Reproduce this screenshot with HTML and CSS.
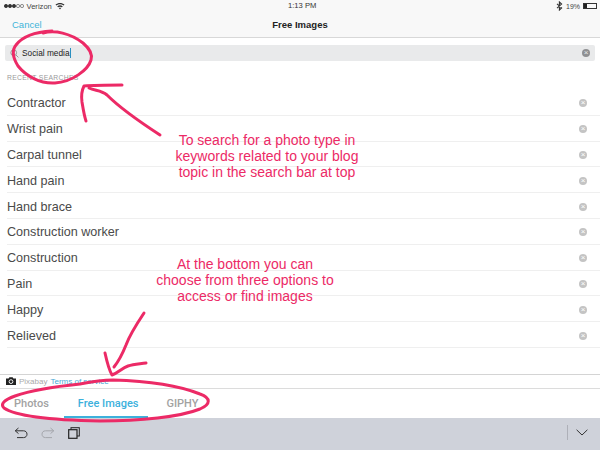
FILE: index.html
```html
<!DOCTYPE html>
<html lang="en">
<head>
  <meta charset="UTF-8" />
  <title>Free Images</title>
  <link rel="stylesheet" href="styles.css">
</head>
<body>
  <div class="page">
    <!-- Top bars -->
    <div class="status-bar">
      <div class="status-left">
        <span class="signal"><i></i><i></i><i></i><i class="off"></i><i class="off"></i></span>
        <span>Verizon</span>
        <svg class="wifi" width="10" height="8" viewBox="0 0 10 8"><path d="M0.5 2.6C3 0.3 7 0.3 9.5 2.6L8.6 3.6C6.5 1.8 3.5 1.8 1.4 3.6Z M2.2 4.4C3.8 3 6.2 3 7.8 4.4L6.9 5.3C5.8 4.4 4.2 4.4 3.1 5.3Z M3.9 6.1C4.5 5.6 5.5 5.6 6.1 6.1L5 7.4Z" fill="#333"/></svg>
      </div>
      <div class="status-time">1:13 PM</div>
      <div class="status-right">
        <svg width="7" height="10" viewBox="0 0 7 10"><path d="M1 2.8L5.6 6.9L3.4 9V1L5.6 3.1L1 7.2" fill="none" stroke="#333" stroke-width="1.1"/></svg>
        <span>19%</span>
        <span class="battery"><span class="battery-fill"></span></span>
      </div>
    </div>
    <div class="nav-bar">
      <a class="cancel">Cancel</a>
      <div class="nav-title">Free Images</div>
    </div>

    <!-- Search -->
    <div class="search-wrap">
      <div class="search-bar">
        <svg class="search-icon" width="9" height="9" viewBox="0 0 9 9"><circle cx="3.7" cy="3.7" r="2.9" fill="none" stroke="#999" stroke-width="1"/><path d="M5.9 5.9L8.4 8.4" stroke="#999" stroke-width="1"/></svg>
        <span class="search-text">Social media</span><span class="caret"></span>
        <span class="clear clear-dark">&times;</span>
      </div>
    </div>
    <div class="recent-label">RECENT SEARCHES</div>

    <ul class="recent-list">
      <li>Contractor<span class="clear">&times;</span></li>
      <li>Wrist pain<span class="clear">&times;</span></li>
      <li>Carpal tunnel<span class="clear">&times;</span></li>
      <li>Hand pain<span class="clear">&times;</span></li>
      <li>Hand brace<span class="clear">&times;</span></li>
      <li>Construction worker<span class="clear">&times;</span></li>
      <li>Construction<span class="clear">&times;</span></li>
      <li>Pain<span class="clear">&times;</span></li>
      <li>Happy<span class="clear">&times;</span></li>
      <li>Relieved<span class="clear">&times;</span></li>
    </ul>

    <!-- Bottom -->
    <div class="attribution">
      <svg width="10" height="8" viewBox="0 0 10 8"><path d="M0 1.6H2.6L3.4 0.2H6.6L7.4 1.6H10V8H0Z" fill="#222"/><circle cx="5" cy="4.6" r="1.9" fill="none" stroke="#fff" stroke-width="0.9"/></svg>
      <span class="pixabay">Pixabay</span>
      <a class="terms">Terms of service</a>
    </div>
    <div class="tabs">
      <span class="tab">Photos</span>
      <span class="tab active">Free Images</span>
      <span class="tab">GIPHY</span>
    </div>
    <div class="toolbar">
      <svg width="14" height="12" viewBox="0 0 14 12"><path d="M4.5 1L1.2 3.8L4.5 6.6M1.5 3.8H9.5C11.6 3.8 13 5.2 13 7.2C13 9.2 11.6 10.6 9.5 10.6H3" fill="none" stroke="#333" stroke-width="1"/></svg>
      <svg class="redo" width="14" height="12" viewBox="0 0 14 12"><path d="M9.5 1L12.8 3.8L9.5 6.6M12.5 3.8H4.5C2.4 3.8 1 5.2 1 7.2C1 9.2 2.4 10.6 4.5 10.6H11" fill="none" stroke="#a4a6ac" stroke-width="1"/></svg>
      <svg class="copy" width="12" height="12" viewBox="0 0 12 12"><rect x="3" y="0.7" width="8.3" height="8.3" fill="none" stroke="#222" stroke-width="1"/><rect x="0.7" y="2.7" width="8.3" height="8.6" fill="#cfd2da" stroke="#222" stroke-width="1.2"/></svg>
      <span class="toolbar-divider"></span>
      <svg width="12" height="7" viewBox="0 0 12 7"><path d="M0.6 0.8L6 6L11.4 0.8" fill="none" stroke="#333" stroke-width="1"/></svg>
    </div>

    <!-- Annotations drawn over the screenshot -->
    <svg class="marks" width="600" height="450" viewBox="0 0 600 450">
      <g fill="none" stroke="#ec2a66" stroke-width="3" stroke-linecap="round" stroke-linejoin="round">
        <path d="M43 33C55 30 70 33 83 43C90 49 93 54 91 60C88 70 72 82 55 83C40 84 26 76 18 66C13 58 12 50 16 45C22 37 35 32 52 31"/>
        <path d="M122 85C108 85 95 85 84 86C82 90 81 95 82 102C83 108 84 115 86 121"/>
        <path d="M89 88C95 91 101 90 107 95C118 106 140 122 160 135"/>
        <path d="M144 313C136 325 130 334 126 345C122 355 118 362 114 367"/>
        <path d="M105 353C107 362 109 370 112 375C118 373 122 368 128 366C134 364 140 364 146 363"/>
        <path d="M80 384C60 386 32 390 15 396C4 400 0 404 4 408C14 415 45 420 100 421C140 421 180 417 200 409C211 404 211 398 200 394C180 386 150 381 113 380C100 380 90 382 80 384"/>
      </g>
    </svg>
    <div class="note note-top">To search for a photo type in<br>keywords related to your blog<br>topic in the search bar at top</div>
    <div class="note note-bottom">At the bottom you can<br>choose from three options to<br>access or find images</div>
  </div>
</body>
</html>
```

FILE: styles.css
```css
* {
  box-sizing: border-box;
}

body {
  margin: 0;
  font-family: "Liberation Sans", Arial, sans-serif;
  background: #fff;
}

.page {
  position: relative;
  width: 600px;
  height: 450px;
  overflow: hidden;
  display: flex;
  flex-direction: column;
}

.status-bar {
  height: 12px;
  background: #f8f8f8;
  display: flex;
  align-items: center;
  justify-content: space-between;
  padding: 0 2px 0 4px;
  font-size: 7.6px;
  color: #444;
  position: relative;
}

.status-left, .status-right {
  display: flex;
  align-items: center;
  gap: 3px;
}

.status-right {
  font-size: 7px;
}

.signal {
  display: flex;
  gap: 0.5px;
}

.signal i {
  width: 3.5px;
  height: 3.5px;
  border-radius: 50%;
  background: #333;
  border: 0.5px solid #333;
}

.signal i.off {
  background: none;
  border-color: #777;
}

.status-time {
  position: absolute;
  left: 288px;
  top: 1px;
  color: #333;
}

.battery {
  width: 14px;
  height: 6px;
  border: 0.7px solid #333;
  display: block;
  margin-right: 1px;
}

.battery-fill {
  display: block;
  width: 3px;
  height: 100%;
  background: #222;
}

.nav-bar {
  height: 26px;
  background: #f8f8f8;
  border-bottom: 1px solid #d8d8d8;
  display: flex;
  align-items: center;
  position: relative;
  font-size: 9.5px;
}

.cancel {
  margin-left: 12px;
  color: #3fb4d8;
}

.nav-title {
  position: absolute;
  left: 0;
  right: 0;
  text-align: center;
  font-weight: bold;
  color: #222;
}

.search-wrap {
  padding: 7px 5px 0;
}

.search-bar {
  height: 16px;
  background: #e9eaeb;
  border-radius: 2px;
  display: flex;
  align-items: center;
  padding: 0 5px;
  font-size: 8.3px;
  color: #222;
}

.search-icon {
  margin-right: 3px;
}

.caret {
  width: 1px;
  height: 10px;
  background: #2a8fc0;
}

.clear {
  width: 8px;
  height: 8px;
  border-radius: 50%;
  background: #c4c4c4;
  color: #fff;
  font-size: 8px;
  line-height: 8px;
  text-align: center;
  margin-left: auto;
  margin-right: 6px;
}

.clear-dark {
  background: #8f9092;
  color: #e9eaeb;
  margin-right: 0;
}

.recent-label {
  margin: 12px 0 0 7px;
  font-size: 6.8px;
  line-height: 9px;
  letter-spacing: 0.3px;
  color: #9a9a9a;
}

.recent-list {
  list-style: none;
  margin: 8px 0 0 7px;
  padding: 0;
}

.recent-list li {
  height: 25.8px;
  padding: 2px 7px 0 0;
  display: flex;
  align-items: center;
  font-size: 12.6px;
  color: #4a4a4a;
  border-bottom: 1px solid #efefef;
}

.attribution {
  margin-top: 26px;
  height: 15px;
  border-top: 1px solid #d4d4d4;
  border-bottom: 1px solid #dcdcdc;
  display: flex;
  align-items: center;
  padding-left: 6px;
  font-size: 8px;
  gap: 3px;
}

.pixabay {
  color: #aaa;
}

.terms {
  color: #49a9d6;
}

.tabs {
  height: 29px;
  display: flex;
  align-items: center;
  font-family: "Roboto", "Liberation Sans", sans-serif;
  font-size: 11px;
  font-weight: 500;
  color: #a2a2a2;
}

.tab {
  margin-left: 14px;
}

.tab.active {
  color: #3cb1dc;
  position: relative;
  margin-left: 29px;
  margin-right: 14px;
}

.tab.active::after {
  content: "";
  position: absolute;
  left: -14px;
  right: -10px;
  bottom: -8px;
  height: 1.5px;
  background: #3cb1dc;
}

.toolbar {
  flex: 1;
  background: #cfd2da;
  display: flex;
  align-items: center;
  padding: 0 12px 2px 14px;
}

.redo {
  margin-left: 13px;
}

.copy {
  margin-left: 13px;
}

.toolbar-divider {
  width: 1px;
  height: 15px;
  background: #aeb0b8;
  margin-left: auto;
  margin-right: 8px;
}

.marks {
  position: absolute;
  left: 0;
  top: 0;
}

.note {
  position: absolute;
  font-size: 14px;
  line-height: 16px;
  text-align: center;
  color: #ec2a66;
}

.note-top {
  left: 162px;
  top: 132px;
  width: 210px;
}

.note-bottom {
  left: 140px;
  top: 256px;
  width: 210px;
}
```
